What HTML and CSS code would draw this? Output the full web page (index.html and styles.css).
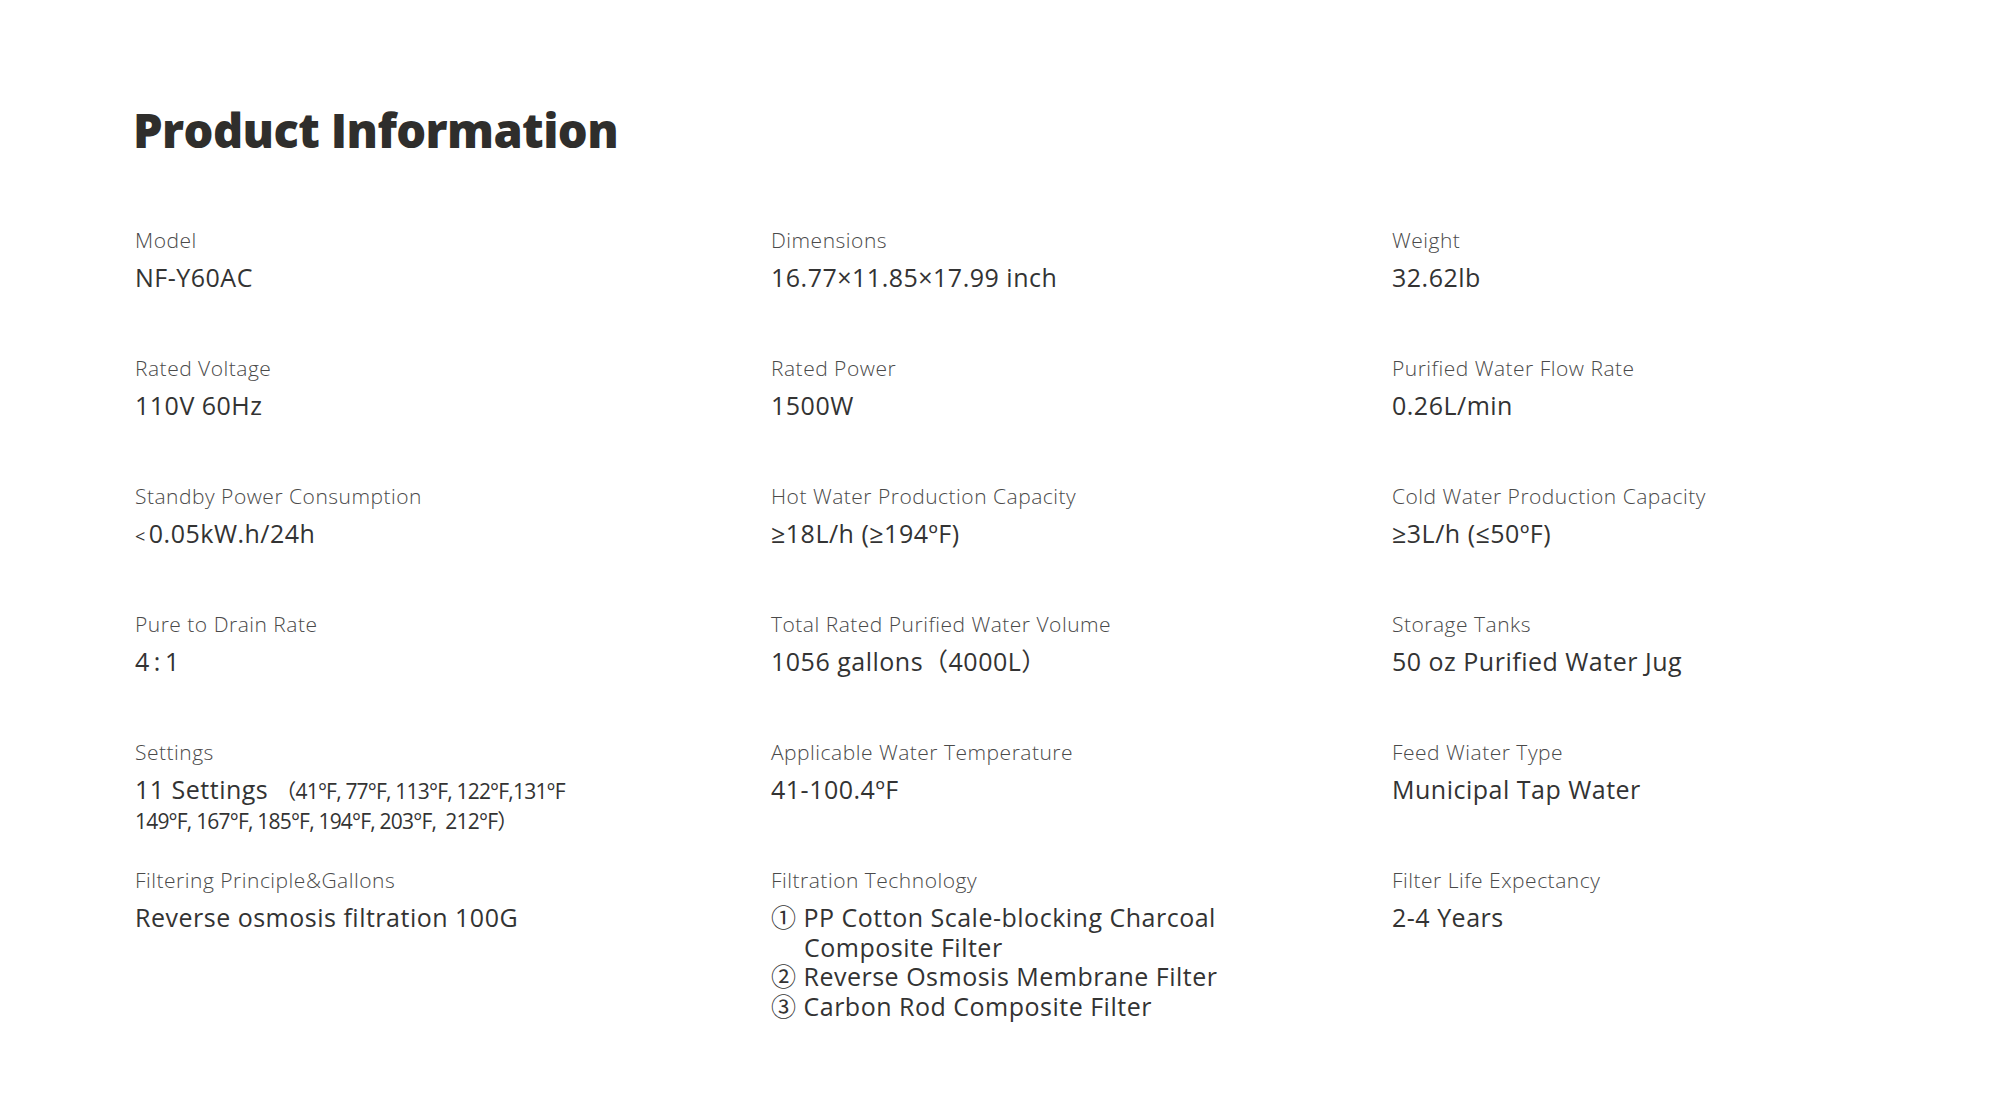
FILE: index.html
```html
<!DOCTYPE html>
<html lang="en">
<head>
<meta charset="utf-8">
<title>Product Information</title>
<link rel="stylesheet" href="styles.css">
</head>
<body>
<main class="page">
  <h1 class="title">Product Information</h1>
  <section class="specs">
    <div class="spec"><div class="label">Model</div><div class="value">NF-Y60AC</div></div>
    <div class="spec"><div class="label">Dimensions</div><div class="value">16.77×11.85×17.99 inch</div></div>
    <div class="spec"><div class="label">Weight</div><div class="value">32.62lb</div></div>

    <div class="spec"><div class="label">Rated Voltage</div><div class="value">110V 60Hz</div></div>
    <div class="spec"><div class="label">Rated Power</div><div class="value">1500W</div></div>
    <div class="spec"><div class="label">Purified Water Flow Rate</div><div class="value">0.26L/min</div></div>

    <div class="spec"><div class="label">Standby Power Consumption</div><div class="value"><span class="lt">&lt;</span>0.05kW.h/24h</div></div>
    <div class="spec"><div class="label">Hot Water Production Capacity</div><div class="value">≥18L/h (≥194ºF)</div></div>
    <div class="spec"><div class="label">Cold Water Production Capacity</div><div class="value">≥3L/h (≤50ºF)</div></div>

    <div class="spec"><div class="label">Pure to Drain Rate</div><div class="value">4<span class="colon">:</span>1</div></div>
    <div class="spec"><div class="label">Total Rated Purified Water Volume</div><div class="value">1056 gallons<span class="paren">（4000L）</span></div></div>
    <div class="spec"><div class="label">Storage Tanks</div><div class="value">50 oz Purified Water Jug</div></div>

    <div class="spec"><div class="label">Settings</div><div class="value">11 Settings <span class="temps">（41°F, 77°F, 113°F, 122°F,131°F<br>149°F, 167°F, 185°F, 194°F, 203°F,&nbsp; 212°F）</span></div></div>
    <div class="spec"><div class="label">Applicable Water Temperature</div><div class="value">41-100.4ºF</div></div>
    <div class="spec"><div class="label">Feed Wiater Type</div><div class="value">Municipal Tap Water</div></div>

    <div class="spec"><div class="label">Filtering Principle&amp;Gallons</div><div class="value">Reverse osmosis filtration 100G</div></div>
    <div class="spec"><div class="label">Filtration Technology</div>
      <div class="value steps">①&nbsp;PP Cotton Scale-blocking Charcoal<br><span class="indent"></span>Composite Filter<br>②&nbsp;Reverse Osmosis Membrane Filter<br>③&nbsp;Carbon Rod Composite Filter</div>
    </div>
    <div class="spec"><div class="label">Filter Life Expectancy</div><div class="value">2-4 Years</div></div>
  </section>
</main>
</body>
</html>
```
FILE: styles.css
```css
html, body {
  margin: 0;
  padding: 0;
  background: #ffffff;
}

body {
  font-family: "Open Sans", "Noto Sans", "Noto Sans CJK SC", sans-serif;
  color: #333333;
}

.page {
  padding: 101px 0 40px 135px;
}

.title {
  margin: 0 0 0 -2px;
  font-family: "Open Sans", sans-serif;
  font-weight: 800;
  font-size: 47px;
  line-height: 58px;
  color: #2f2e2c;
  letter-spacing: -0.6px;
}

.specs {
  margin-top: 66px;
  display: grid;
  grid-template-columns: 636px 621px 1fr;
  grid-auto-rows: minmax(128px, auto);
}

.label {
  font-weight: 300;
  font-size: 21px;
  line-height: 30px;
  color: #4a4a4a;
  letter-spacing: 0.5px;
}

.value {
  margin-top: 8px;
  font-weight: 400;
  font-size: 25px;
  line-height: 29.5px;
  color: #333333;
  letter-spacing: 0.5px;
}

.lt {
  font-size: 18px;
  margin-right: 3px;
}

.colon {
  margin: 0 4px;
}

.paren {
  line-height: 20px;
}

.temps {
  font-size: 21px;
  line-height: 20px;
  letter-spacing: -0.8px;
}

.steps {
  line-height: 29.5px;
}

.indent {
  display: inline-block;
  width: 33px;
}
```
